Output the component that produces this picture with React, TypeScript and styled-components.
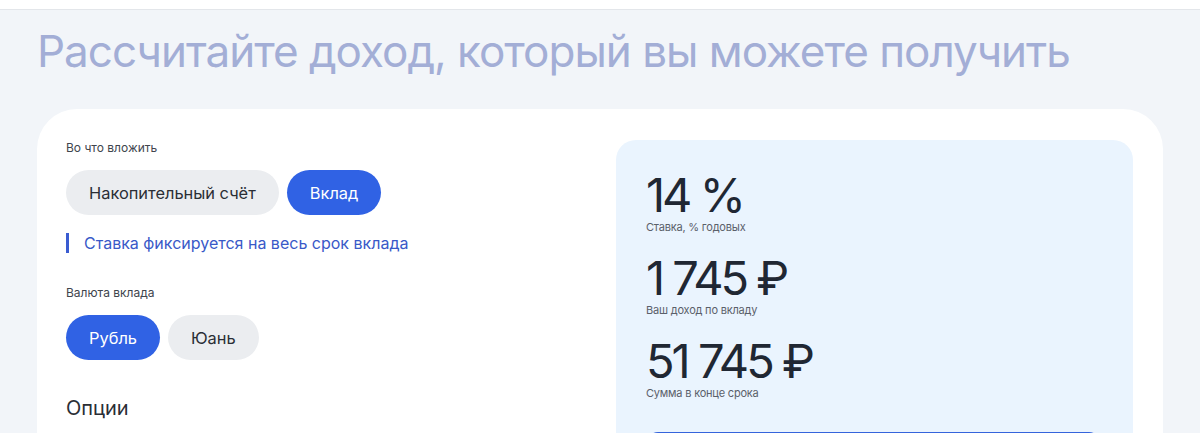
import React from "react";
import styled, { createGlobalStyle } from "styled-components";

const Global = createGlobalStyle`
  html, body { margin: 0; padding: 0; background: #f2f5f9; }
  body { font-family: Inter, "Noto Sans", sans-serif; color: #21262f; }
  * { box-sizing: border-box; }
`;

const TopStrip = styled.div`
  height: 10px;
  background: #ffffff;
  border-bottom: 1px solid #e3e6ea;
`;

const Page = styled.main`
  padding: 0 37px;
`;

const Title = styled.h1`
  margin: 0;
  padding: 10px 0 0;
  height: 99px;
  font-size: 44px;
  line-height: 62px;
  font-weight: 400;
  letter-spacing: -1px;
  color: #a3aed6;
`;

const Card = styled.section`
  background: #ffffff;
  border-radius: 40px 40px 0 0;
  width: 1126px;
  padding: 31px 30px 0 29px;
  display: grid;
  grid-template-columns: 520px 517px;
  column-gap: 30px;
  height: 330px;
  overflow: hidden;
`;

const Left = styled.div`
  display: flex;
  flex-direction: column;
`;

const Label = styled.div`
  font-size: 12px;
  line-height: 16px;
  color: #40454d;
  margin-bottom: 14px;
`;

const Row = styled.div`
  display: flex;
  gap: 8px;
`;

const Pill = styled.button<{ $active?: boolean }>`
  height: 45px;
  border: none;
  border-radius: 23px;
  padding: 0 23px;
  font-family: inherit;
  font-size: 16.4px;
  font-weight: 400;
  background: ${(p) => (p.$active ? "#3062e4" : "#ebedf0")};
  color: ${(p) => (p.$active ? "#ffffff" : "#2a2e35")};
  cursor: pointer;
`;

const Note = styled.div`
  margin-top: 18px;
  border-left: 3px solid #3a5cd1;
  padding-left: 15px;
  height: 20px;
  display: flex;
  align-items: center;
  font-size: 16px;
  color: #3959c8;
`;

const Section = styled.div`
  margin-top: 32px;
`;

const Subtitle = styled.h2`
  margin: 36px 0 0;
  font-size: 20px;
  line-height: 24px;
  font-weight: 400;
  color: #2a2e35;
`;

const Panel = styled.div`
  background: #eaf4fe;
  border-radius: 20px 20px 0 0;
  padding: 30px 30px 0;
  display: flex;
  flex-direction: column;
`;

const Stat = styled.div`
  display: flex;
  flex-direction: column;
  margin-bottom: 19px;
`;

const Value = styled.div`
  font-size: 47px;
  line-height: 50px;
  font-weight: 400;
  letter-spacing: -3px;
  color: #202733;
`;

const Caption = styled.div`
  font-size: 11px;
  line-height: 14px;
  color: #5a606a;
  letter-spacing: -0.2px;
`;

const CTA = styled.div`
  margin-top: 13px;
  height: 40px;
  width: 455px;
  background: #3564dc;
  border-radius: 12px 12px 0 0;
`;

export default function App() {
  return (
    <>
      <Global />
      <TopStrip />
      <Page>
        <Title>Рассчитайте доход, который вы можете получить</Title>
        <Card>
          <Left>
            <Label>Во что вложить</Label>
            <Row>
              <Pill>Накопительный счёт</Pill>
              <Pill $active>Вклад</Pill>
            </Row>
            <Note>Ставка фиксируется на весь срок вклада</Note>
            <Section>
              <Label>Валюта вклада</Label>
              <Row>
                <Pill $active>Рубль</Pill>
                <Pill>Юань</Pill>
              </Row>
            </Section>
            <Subtitle>Опции</Subtitle>
          </Left>
          <Panel>
            <Stat>
              <Value>14 %</Value>
              <Caption>Ставка, % годовых</Caption>
            </Stat>
            <Stat>
              <Value>1 745 ₽</Value>
              <Caption>Ваш доход по вкладу</Caption>
            </Stat>
            <Stat>
              <Value>51 745 ₽</Value>
              <Caption>Сумма в конце срока</Caption>
            </Stat>
            <CTA />
          </Panel>
        </Card>
      </Page>
    </>
  );
}
